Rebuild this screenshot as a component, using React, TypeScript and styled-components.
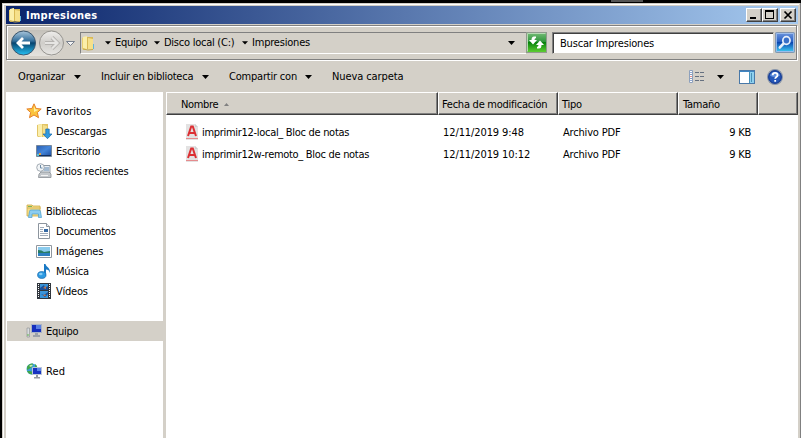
import React from 'react';
import styled, { createGlobalStyle } from 'styled-components';

const FACE = '#d4d0c8';

const Global = createGlobalStyle`
  * { box-sizing: border-box; }
  html, body { margin: 0; padding: 0; background: #000; overflow: hidden; }
`;

const Desktop = styled.div`
  width: 801px;
  height: 438px;
  padding: 3px 0 0 2px;
  background: #000 linear-gradient(#555, #555) 611px 0 / 32px 2px no-repeat;
  font: 11px/14px 'DejaVu Sans Condensed', 'DejaVu Sans', sans-serif;
  font-stretch: condensed;
  color: #000;
  overflow: hidden;
`;

const Window = styled.div`
  display: flex;
  flex-direction: column;
  width: 799px;
  height: 435px;
  padding: 1px 1px 0 1px;
  border-right: 1px solid #808080;
  background: ${FACE};
`;

const Frame = styled.div`
  flex: 1;
  display: flex;
  flex-direction: column;
  min-height: 0;
  border: solid #fff;
  border-width: 1px 0 0 1px;
  padding: 1px 0 0 2px;
`;

const Label = styled.span<{ $track?: number; $raised?: boolean }>`
  display: block;
  padding-top: ${(p) => (p.$raised ? 0 : 2)}px;
  letter-spacing: ${(p) => p.$track ?? -0.25}px;
  white-space: pre;
`;

const TitleBar = styled.header`
  display: flex;
  align-items: center;
  height: 18px;
  width: 792px;
  padding: 0 2px;
  background: linear-gradient(90deg, #0a246a, #a6caf0);
  color: #fff;
  font-weight: bold;
`;

const TitleText = styled(Label)`
  flex: 1;
  margin-left: 2px;
`;

const CaptionButton = styled.button<{ $gap?: number }>`
  width: 16px;
  height: 14px;
  padding: 0;
  margin-left: ${(p) => p.$gap ?? 0}px;
  border: 1px solid;
  border-color: #fff #404040 #404040 #fff;
  box-shadow: inset -1px -1px #808080;
  background: ${FACE};
  svg { display: block; }
`;

const NavBar = styled.div`
  display: flex;
  align-items: flex-start;
  flex: none;
  width: 791px;
  height: 35px;
  margin-top: 1px;
  padding: 6px 0 0 3px;
  border: 1px solid #808080;
  box-shadow: inset 1px 1px #fff, 1px 1px #fff;
`;

const Travel = styled.div`
  width: 70px;
  height: 26px;
  margin-top: -2px;
`;

const AddressBar = styled.div`
  display: flex;
  align-items: center;
  width: 446px;
  height: 22px;
  padding-right: 11px;
  border: 1px solid;
  border-color: #808080 ${FACE} #fff #808080;
  border-right: 0;
`;

const Crumb = styled.span<{ $w: number }>`
  display: flex;
  align-items: center;
  justify-content: space-between;
  width: ${(p) => p.$w}px;
  padding-right: 4px;
`;

const ArrowSlot = styled.span<{ $left?: number; $right?: number }>`
  display: flex;
  margin-left: ${(p) => p.$left ?? 0}px;
  margin-right: ${(p) => p.$right ?? 0}px;
`;

const EndArrow = styled.span`
  display: flex;
  margin-left: auto;
`;

const SearchBox = styled.div`
  display: flex;
  align-items: center;
  width: 222px;
  height: 22px;
  margin: 0 1px 0 5px;
  padding-left: 7px;
  border: 1px solid;
  border-color: #808080 ${FACE} ${FACE} #808080;
  box-shadow: inset 1px 1px #404040;
  background: #fff;
`;

const SquareButton = styled.div`
  width: 21px;
  height: 21px;
  svg { display: block; }
`;

const CommandBar = styled.div`
  display: flex;
  align-items: center;
  flex: none;
  height: 32px;
  padding: 1px 0 0 12px;
`;

const Command = styled.span<{ $w: number }>`
  display: flex;
  align-items: center;
  justify-content: space-between;
  width: ${(p) => p.$w}px;
  margin-right: 20px;
`;

const Tools = styled.div`
  display: flex;
  align-items: center;
  margin-left: auto;
  padding-right: 16px;
`;

const Body = styled.main`
  flex: 1;
  display: flex;
  gap: 3px;
  width: 792px;
  min-height: 0;
`;

const Tree = styled.nav`
  display: flex;
  flex-direction: column;
  gap: 20px;
  width: 157px;
  padding: 9px 0 0 1px;
  background: #fff;
`;

const TreeRow = styled.div<{ $depth: number; $selected?: boolean }>`
  display: flex;
  align-items: center;
  gap: 4px;
  height: 20px;
  padding-left: ${(p) => (p.$depth ? 29 : 19)}px;
  background: ${(p) => (p.$selected ? FACE : 'transparent')};
  svg { flex: none; }
`;

const List = styled.section`
  width: 632px;
  background: #fff;
`;

const HeaderRow = styled.div`
  display: grid;
  grid-template-columns: 272px 120px 120px 80px 40px;
  height: 23px;
`;

const HeaderCell = styled.div<{ $pad: number }>`
  display: flex;
  align-items: center;
  gap: 6px;
  padding-left: ${(p) => p.$pad}px;
  padding-top: 1px;
  border: 1px solid;
  border-color: #fff #404040 #404040 #fff;
  box-shadow: inset -1px -1px #808080;
  background: ${FACE};
`;

const Files = styled.div`
  padding-top: 6px;
`;

const FileRow = styled.div`
  display: grid;
  grid-template-columns: 18px 18px 241px 120px 115px 73px;
  align-items: center;
  height: 22px;
`;

const Size = styled(Label)`
  text-align: right;
`;

const Down = () => (
  <svg width="7" height="4" viewBox="0 0 7 4">
    <path d="M0 0h7L3.500 4z" fill="#000" />
  </svg>
);

const SmallDown = () => (
  <svg width="6" height="4" viewBox="0 0 6 4">
    <path d="M0 .3h6L3 3.500z" fill="#000" />
  </svg>
);

const FolderIcon = () => (
  <svg width="16" height="16" viewBox="0 0 16 16">
    <path d="M1 3l5-2v13l-3 1-2-1z" fill="#e9cf70" />
    <path d="M6 2h6v12H6z" fill="#d9b955" />
    <path d="M2 2l4-1v13l-4-1z" fill="#fbeea9" />
    <path d="M7 3l5 1v11l-5-1z" fill="#f6e08a" />
    <path d="M12 9h1v5h-1z" fill="#5fb4dc" />
    <path d="M2 14l5 1 5-.5" stroke="#c6a94c" fill="none" />
  </svg>
);

const TravelIcon = () => (
  <svg width="70" height="26" viewBox="0 0 70 26">
    <defs>
      <linearGradient id="pill" x2="0" y2="1">
        <stop offset="0" stopColor="#c4c1ba" />
        <stop offset="1" stopColor="#e4e2dd" />
      </linearGradient>
      <linearGradient id="back" x2="0" y2="1">
        <stop offset="0" stopColor="#a9c6dc" />
        <stop offset=".42" stopColor="#316e9b" />
        <stop offset=".5" stopColor="#07456f" />
        <stop offset="1" stopColor="#27c2f5" />
      </linearGradient>
      <linearGradient id="fwd" x2="0" y2="1">
        <stop offset="0" stopColor="#efeeec" />
        <stop offset=".5" stopColor="#cfcdc9" />
        <stop offset="1" stopColor="#e8e7e4" />
      </linearGradient>
    </defs>
    <rect x="2" y="0" width="52" height="26" rx="13" fill="url(#pill)" />
    <circle cx="13.500" cy="13" r="12" fill="url(#back)" stroke="#3b566d" />
    <path d="M13 8l-5 5 5 5M8.500 13H20" stroke="#fff" strokeWidth="2.800" fill="none" />
    <circle cx="41.500" cy="13" r="12" fill="url(#fwd)" stroke="#96948f" />
    <path d="M42 7.500l5.500 5.500-5.500 5.500M35 13h12" stroke="#b4b2af" strokeWidth="4" fill="none" />
    <path d="M42 7.500l5.500 5.500-5.500 5.500M35 13h12" stroke="#e6e5e3" strokeWidth="2.200" fill="none" />
    <path d="M56.500 11.500h8l-4 4z" fill="#f4f4f4" stroke="#6b7584" strokeWidth=".9" />
  </svg>
);

const RefreshIcon = () => (
  <svg width="21" height="21" viewBox="0 0 21 21">
    <defs>
      <linearGradient id="green" x2="0" y2="1">
        <stop offset="0" stopColor="#78bd79" />
        <stop offset=".48" stopColor="#2b9437" />
        <stop offset=".5" stopColor="#08820c" />
        <stop offset="1" stopColor="#62d234" />
      </linearGradient>
    </defs>
    <rect x=".5" y=".5" width="20" height="20" fill="url(#green)" stroke="#8f9a8c" />
    <path d="M1.500 19.500v-18h18" stroke="#b7dab3" fill="none" />
    <path d="M10 4.500H8Q5.500 4.500 5.500 8H3l4 4.500L11 8H8.500Q8.500 6.500 10 6z" fill="#fff" />
    <path d="M11 16.500h2q2.500 0 2.500-3.500H18l-4-4.500-4 4.500h2.500q0 1.500-1.500 2z" fill="#fff" />
  </svg>
);

const SearchIcon = () => (
  <svg width="20" height="21" viewBox="0 0 21 21" preserveAspectRatio="none">
    <defs>
      <linearGradient id="blue" x2="0" y2="1">
        <stop offset="0" stopColor="#6f96dc" />
        <stop offset=".48" stopColor="#235cc3" />
        <stop offset=".5" stopColor="#0b47b0" />
        <stop offset="1" stopColor="#43d4f6" />
      </linearGradient>
    </defs>
    <rect x=".5" y=".5" width="20" height="20" rx="1" fill="url(#blue)" stroke="#8294ad" />
    <path d="M1.500 19.500v-18h18v18z" stroke="#9dbdec" fill="none" />
    <path d="M9 11.500L5 15.500" stroke="#e8f0fb" strokeWidth="2.600" strokeLinecap="round" />
    <circle cx="12" cy="8.500" r="3.800" fill="#3a70c8" stroke="#e8f0fb" strokeWidth="1.800" />
  </svg>
);

const ViewIcon = () => (
  <svg width="15" height="13" viewBox="0 0 15 13">
    <path d="M.5.5h3v12h-3zM.5 4.500h3M.5 8.500h3" fill="#fff" stroke="#8da0bc" />
    <path d="M1.500 2h1v1h-1z" fill="#2b56a8" />
    <path d="M1.500 6h1v1h-1z" fill="#d02020" />
    <path d="M1.500 10h1v1h-1z" fill="#2b56a8" />
    <path d="M6 2.500h4m1 0h4M6 6.500h4m1 0h4M6 10.500h4m1 0h4" stroke="#657080" />
  </svg>
);

const PaneIcon = () => (
  <svg width="16" height="14" viewBox="0 0 16 14">
    <rect x=".5" y=".5" width="15" height="13" fill="#fff" stroke="#4878a8" />
    <path d="M1 1.500h14" stroke="#3f86c2" />
    <path d="M10 2h5v11h-5z" fill="#8ed0ee" />
    <path d="M10.500 2v11M12.500 3v9" stroke="#4791b8" />
  </svg>
);

const HelpIcon = () => (
  <svg width="16" height="16" viewBox="0 0 16 16">
    <circle cx="8" cy="8" r="7.400" fill="#2457b8" stroke="#8c97a8" strokeWidth="1.200" />
    <circle cx="8" cy="8" r="6.300" fill="none" stroke="#17388e" />
    <path d="M3 6.500a5.300 5.300 0 0 1 10 0c-3 2-7 2-10 0z" fill="#5d8ddb" />
    <path d="M5.700 6.200c0-3 4.800-3 4.800 0 0 1.800-2.300 1.700-2.300 3.600M8.200 11v1.800" stroke="#fff" strokeWidth="1.800" fill="none" />
  </svg>
);

const icons: Record<string, React.ReactNode> = {
  star: <>
    <path d="M8 .8l2.100 4.700 5.100.5-3.800 3.500 1.100 5.200L8 12l-4.500 2.700 1.100-5.200L.8 6l5.100-.5z" fill="#fbc33c" stroke="#e6812a" />
    <path d="M8 3l1.300 3.300 3.300.4L8 9z" fill="#fff0a0" />
  </>,
  downloads: <>
    <path d="M1 2l5-1h6v13H2l-1-1z" fill="#e2c566" />
    <path d="M2 2l4-1v13l-4-1z" fill="#fbefae" />
    <path d="M7 2l4 1v11H7z" fill="#f4df8d" />
    <path d="M9.800 6h3.400v5H16l-4.500 4.700L7 11h2.800z" fill="#319bdf" stroke="#1b67a8" strokeWidth=".7" />
  </>,
  desktop: <>
    <defs>
      <linearGradient id="screen" x2="1" y2="1">
        <stop offset="0" stopColor="#2a5cae" />
        <stop offset=".5" stopColor="#4486da" />
        <stop offset="1" stopColor="#1d4c9c" />
      </linearGradient>
    </defs>
    <path d="M.5 2.500h15v11H.5z" fill="url(#screen)" stroke="#76879b" />
    <path d="M1 12h14v1H1z" fill="#14305f" />
    <path d="M1 11h2v2H1z" fill="#58c1d5" /><path d="M3 10h2v2H3z" fill="#e6a341" />
  </>,
  recent: <>
    <path d="M5 2.500h9v8H5z" fill="#e8eef4" stroke="#8f99a3" />
    <path d="M8 5h5M8 7h5" stroke="#5f87b0" />
    <path d="M3 11l2-2h8l2 2v3.500H2.500z" fill="#c4c8cc" stroke="#8a8f94" strokeWidth=".8" />
    <path d="M5 12.500h7" stroke="#f4f4f4" />
    <circle cx="4.500" cy="4.500" r="3.800" fill="#f2f5f7" stroke="#a3abb3" />
    <path d="M4.500 2v3h2" stroke="#6d8aa5" fill="none" />
  </>,
  libraries: <>
    <path d="M1 2h5l1 1h7v10H1z" fill="#f4dc84" stroke="#cda945" strokeWidth=".8" />
    <path d="M1 5h14" stroke="#d8b85e" /><path d="M2 3.500h4" stroke="#7ab35b" />
    <path d="M3.500 8.500q0-1.500 1.500-1.500h8q1.500 0 1.500 1.500l1 6h-3V11H6v3.500H2.500z" fill="#8ccdf0" stroke="#4a9fd0" strokeWidth=".7" />
  </>,
  document: <>
    <path d="M2.500.5h8l3 3v12h-11z" fill="#fff" stroke="#8d959e" />
    <path d="M10.500.5v3h3" fill="#e7edf4" stroke="#8d959e" />
    <path d="M4 4.500h4M4 6.500h3M4 8.500h3M4 10.500h8M4 12.500h8" stroke="#a2adba" />
    <path d="M8 6h4v3H8z" fill="#356aa5" />
  </>,
  picture: <>
    <path d="M.5 2.500h15v12H.5z" fill="#fff" stroke="#90979f" />
    <path d="M2 4h12v9H2z" fill="#8acbed" />
    <path d="M2 7q4 0 6 2l6-1v2H2z" fill="#277c65" />
    <path d="M2 10h12v3H2z" fill="#2c7fc0" />
  </>,
  music: <>
    <path d="M8 1h1.500c.5 3 5 3.500 4.500 9-.7-2.500-2-3.500-4-3.500V13H8z" fill="#1878c4" />
    <ellipse cx="5.800" cy="12" rx="4.200" ry="3.400" fill="#2d9be3" stroke="#1766a8" strokeWidth=".7" />
    <ellipse cx="4.800" cy="11" rx="1.800" ry="1.200" fill="#83cbf5" />
  </>,
  video: <>
    <path d="M1 0h14v16H1z" fill="#30363d" />
    <path d="M4 1h8v6H4zM4 8h8v7H4z" fill="#3a94d8" />
    <path d="M4 5l4-3 1 3 3-2v4H4zM5 11l3 1 4-3v2l-3 3z" fill="#1b5099" />
    <path d="M7 5l3-2v3zM7 13l2-2 1 2z" fill="#bc754e" />
    <path d="M2.500 1v14M13.500 1v14" stroke="#fff" strokeWidth="1" strokeDasharray="1 1" />
  </>,
  computer: <>
    <path d="M1 5h2.500v9H1z" fill="#d8dcdf" stroke="#929699" strokeWidth=".7" /><path d="M1.500 11h1v2h-1z" fill="#62b848" />
    <path d="M5.500 1.500h10v8h-10z" fill="#162fbd" stroke="#a9b3c5" />
    <path d="M10 2h5v4h-5z" fill="#597fe2" />
    <path d="M9 10h3v2h2v2H7v-2h2z" fill="#9da2aa" />
  </>,
  network: <>
    <circle cx="6" cy="6" r="5.500" fill="#3c9fd9" />
    <path d="M1 4Q3 0 7 .5L6 4 3 6 1 7zM4 8l3 1-1 2.500Q2 11 1 8zM9 1q2 1 2.500 4H9z" fill="#42a74a" />
    <path d="M3 3q2-2 4-1L5 4z" fill="#cceeb5" />
    <path d="M6.500 4.500h9v7h-9z" fill="#1834c2" stroke="#bbc5d6" />
    <path d="M11 5h4v3h-4z" fill="#5b84e6" />
    <path d="M10 12h2v2h2v1.500H8V14h2z" fill="#9499a1" />
  </>,
};

const Icon = ({ name }: { name: string }) => (
  <svg width="16" height="16" viewBox="0 0 16 16">{icons[name]}</svg>
);

const PdfIcon = () => (
  <svg width="12" height="16" viewBox="0 0 12 16">
    <path d="M0 0h9l3 3v13H0z" fill="#e3e2e2" />
    <path d="M9 0v3h3z" fill="#cfcfcf" />
    <path d="M2 12L5.200 2.500h1.600L10 12M3.500 9h5" stroke="#dc2f33" strokeWidth="2" fill="none" />
    <path d="M0 14h12v1H0z" fill="#e58b8d" />
  </svg>
);

type Node = { icon: string; text: string; depth: number; selected?: boolean; track?: number };

const groups: Node[][] = [
  [
    { icon: 'star', text: 'Favoritos', depth: 0, track: 0.1 },
    { icon: 'downloads', text: 'Descargas', depth: 1, track: -0.1 },
    { icon: 'desktop', text: 'Escritorio', depth: 1 },
    { icon: 'recent', text: 'Sitios recientes', depth: 1, track: -0.2 },
  ],
  [
    { icon: 'libraries', text: 'Bibliotecas', depth: 0, track: -0.3 },
    { icon: 'document', text: 'Documentos', depth: 1, track: -0.3 },
    { icon: 'picture', text: 'Imágenes', depth: 1, track: -0.15 },
    { icon: 'music', text: 'Música', depth: 1 },
    { icon: 'video', text: 'Vídeos', depth: 1 },
  ],
  [{ icon: 'computer', text: 'Equipo', depth: 0, selected: true }],
  [{ icon: 'network', text: 'Red', depth: 0, track: 0.1 }],
];

const files = [
  { name: 'imprimir12-local_ Bloc de notas', date: '12/11/2019 9:48' },
  { name: 'imprimir12w-remoto_ Bloc de notas', date: '12/11/2019 10:12' },
];

export default function App() {
  return (
    <Desktop>
      <Global />
      <Window>
        <Frame>
          <TitleBar>
            <FolderIcon />
            <TitleText $track={0.28}>Impresiones</TitleText>
            <CaptionButton aria-label="Minimizar">
              <svg width="14" height="12"><path d="M3 8h6v2H3z" /></svg>
            </CaptionButton>
            <CaptionButton aria-label="Maximizar">
              <svg width="14" height="12"><path d="M2 1h9v9H2zM3 3v6h7V3z" fillRule="evenodd" /></svg>
            </CaptionButton>
            <CaptionButton aria-label="Cerrar" $gap={2}>
              <svg width="14" height="12"><path d="M3.500 2.500l7 7m0-7l-7 7" stroke="#000" strokeWidth="1.700" /></svg>
            </CaptionButton>
          </TitleBar>
          <NavBar>
            <Travel><TravelIcon /></Travel>
            <AddressBar>
              <FolderIcon />
              <ArrowSlot $left={8} $right={4}><SmallDown /></ArrowSlot>
              <Crumb $w={49}><Label $raised>Equipo</Label><SmallDown /></Crumb>
              <Crumb $w={88}><Label $raised>Disco local (C:)</Label><SmallDown /></Crumb>
              <Label $raised $track={-0.2}>Impresiones</Label>
              <EndArrow><Down /></EndArrow>
            </AddressBar>
            <SquareButton><RefreshIcon /></SquareButton>
            <SearchBox><Label $track={-0.17}>Buscar Impresiones</Label></SearchBox>
            <SquareButton><SearchIcon /></SquareButton>
          </NavBar>
          <CommandBar>
            <Command $w={63}><Label $raised $track={-0.15}>Organizar</Label><Down /></Command>
            <Command $w={108}><Label $raised>Incluir en biblioteca</Label><Down /></Command>
            <Command $w={83}><Label $raised $track={-0.2}>Compartir con</Label><Down /></Command>
            <Label $raised $track={-0.1}>Nueva carpeta</Label>
            <Tools>
              <ViewIcon />
              <ArrowSlot $left={13}><Down /></ArrowSlot>
              <ArrowSlot $left={15}><PaneIcon /></ArrowSlot>
              <ArrowSlot $left={12}><HelpIcon /></ArrowSlot>
            </Tools>
          </CommandBar>
          <Body>
            <Tree>
              {groups.map((group, i) => (
                <div key={i}>
                  {group.map((n) => (
                    <TreeRow key={n.text} $depth={n.depth} $selected={n.selected}>
                      <Icon name={n.icon} />
                      <Label $track={n.track}>{n.text}</Label>
                    </TreeRow>
                  ))}
                </div>
              ))}
            </Tree>
            <List>
              <HeaderRow>
                <HeaderCell $pad={14}>
                  <Label $track={-0.35}>Nombre</Label>
                  <svg width="5" height="3"><path d="M0 3h5L2.500 0z" fill="#808080" /></svg>
                </HeaderCell>
                <HeaderCell $pad={3}><Label>Fecha de modificación</Label></HeaderCell>
                <HeaderCell $pad={3}><Label>Tipo</Label></HeaderCell>
                <HeaderCell $pad={4}><Label>Tamaño</Label></HeaderCell>
                <HeaderCell $pad={0} />
              </HeaderRow>
              <Files>
                {files.map((f) => (
                  <FileRow key={f.name}>
                    <span />
                    <ArrowSlot $left={2}><PdfIcon /></ArrowSlot>
                    <Label $track={-0.3}>{f.name}</Label>
                    <Label $track={-0.1}>{f.date}</Label>
                    <Label $track={-0.18}>Archivo PDF</Label>
                    <Size>9 KB</Size>
                  </FileRow>
                ))}
              </Files>
            </List>
          </Body>
        </Frame>
      </Window>
    </Desktop>
  );
}
